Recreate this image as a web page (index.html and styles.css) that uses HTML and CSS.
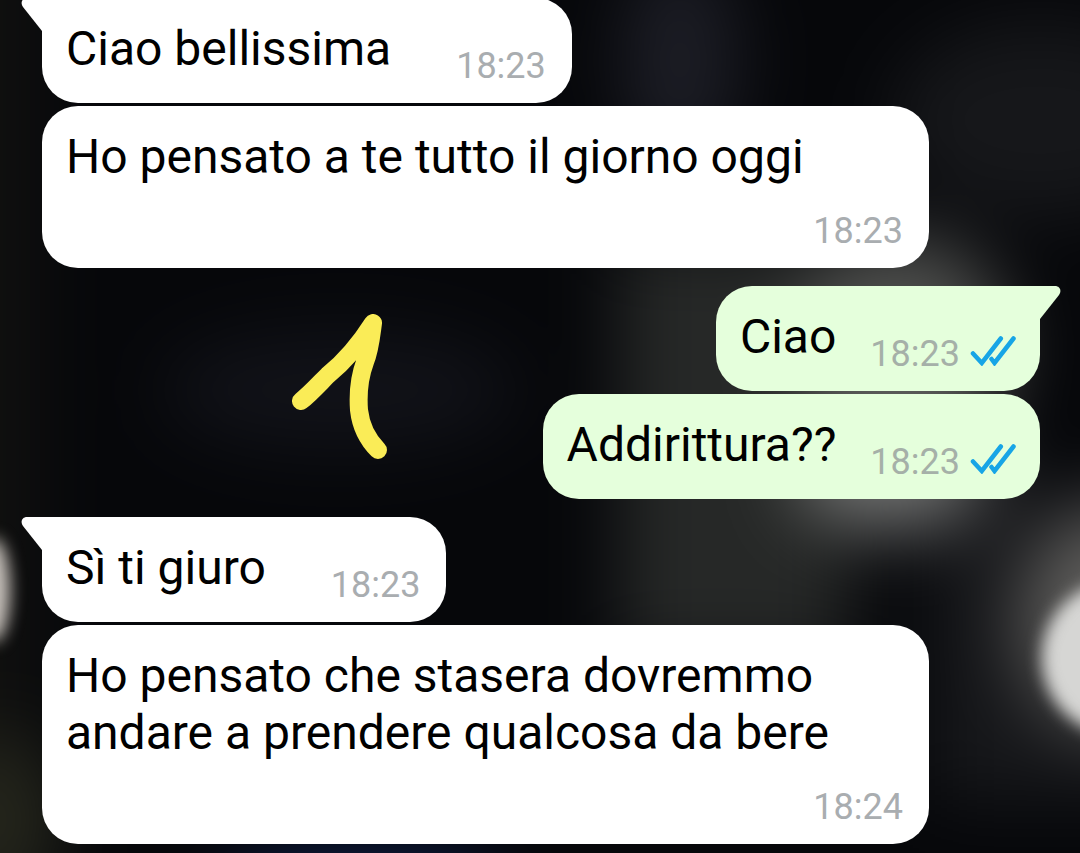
FILE: index.html
```html
<!DOCTYPE html>
<html lang="it">
<head>
    <meta charset="UTF-8">
    <meta name="viewport" content="width=device-width, initial-scale=1.0">
    <title>Chat</title>
    <link rel="stylesheet" href="styles.css">
</head>
<body>
    <main class="chat">
        <!-- out of focus lights behind the messages -->
        <svg class="wallpaper" viewBox="0 0 1080 853" preserveAspectRatio="xMidYMid slice" aria-hidden="true">
            <defs>
                <filter id="far" color-interpolation-filters="sRGB"><feGaussianBlur stdDeviation="36"/></filter>
                <filter id="near" x="-20%" y="-100%" width="140%" height="300%" color-interpolation-filters="sRGB"><feGaussianBlur stdDeviation="8"/></filter>
            </defs>
            <g filter="url(#far)">
                <rect x="-300" y="-300" width="1680" height="1453" fill="#06070a"/>
                <rect x="-300" y="-300" width="340" height="1453" fill="#10100f"/>
                <ellipse cx="680" cy="60" rx="60" ry="110" fill="#1c1d25"/>
                <ellipse cx="1040" cy="120" rx="150" ry="100" fill="#16171a"/>
                <ellipse cx="340" cy="390" rx="180" ry="60" fill="#111218"/>
                <rect x="620" y="240" width="230" height="420" fill="#262827"/>
                <rect x="930" y="480" width="300" height="320" fill="#17181b"/>
                <ellipse cx="0" cy="820" rx="60" ry="90" fill="#25261c"/>
                <ellipse cx="900" cy="350" rx="110" ry="115" fill="#4e4f4d"/>
                <ellipse cx="890" cy="470" rx="95" ry="60" fill="#747574"/>
                <ellipse cx="1110" cy="620" rx="90" ry="110" fill="#5e5d5b"/>
                <ellipse cx="360" cy="900" rx="150" ry="40" fill="#10255c"/>
            </g>
            <g filter="url(#near)">
                <circle cx="1119" cy="658" r="77" fill="#d6d6d4"/>
                <ellipse cx="-6" cy="590" rx="16" ry="52" fill="#c8c2bc"/>
            </g>
        </svg>

        <section class="group incoming">
            <article class="bubble">
                <svg class="tail" viewBox="0 0 22 34" aria-hidden="true"><path d="M22 0H6C1 0-1 5 2 9L21 33H22Z"/></svg>
                <p class="text">Ciao bellissima</p>
                <div class="meta"><time>18:23</time></div>
            </article>
            <article class="bubble">
                <p class="text">Ho pensato a te tutto il giorno oggi</p>
                <div class="meta"><time>18:23</time></div>
            </article>
        </section>

        <section class="group outgoing">
            <article class="bubble">
                <svg class="tail" viewBox="0 0 22 34" aria-hidden="true"><path d="M0 0H16C21 0 23 5 20 9L1 33H0Z"/></svg>
                <p class="text">Ciao</p>
                <div class="meta">
                    <time>18:23</time>
                    <svg class="ticks" viewBox="0 0 46 30" role="img" aria-label="Letto"><path d="M3 17.5L11.8 27L30.8 2.5M21.5 23L24.5 27L43.5 2.5"/></svg>
                </div>
            </article>
            <article class="bubble">
                <p class="text">Addirittura??</p>
                <div class="meta">
                    <time>18:23</time>
                    <svg class="ticks" viewBox="0 0 46 30" role="img" aria-label="Letto"><path d="M3 17.5L11.8 27L30.8 2.5M21.5 23L24.5 27L43.5 2.5"/></svg>
                </div>
            </article>
        </section>

        <section class="group incoming">
            <article class="bubble">
                <svg class="tail" viewBox="0 0 22 34" aria-hidden="true"><path d="M22 0H6C1 0-1 5 2 9L21 33H22Z"/></svg>
                <p class="text">Sì ti giuro</p>
                <div class="meta"><time>18:23</time></div>
            </article>
            <article class="bubble">
                <p class="text">Ho pensato che stasera dovremmo andare a prendere qualcosa da bere</p>
                <div class="meta"><time>18:24</time></div>
            </article>
        </section>

        <!-- hand-drawn mark over the chat -->
        <svg class="doodle" viewBox="0 0 96 146" aria-hidden="true">
            <path d="M9 87C18 80 27 70 36 61C52 48 67 31 81 9C79 24 78 36 73 48C67 64 66 82 67 96C69 114 76 126 86 136"/>
        </svg>
    </main>
</body>
</html>
```
FILE: styles.css
```css
* {
    box-sizing: border-box;
}

body {
    margin: 0;
    font-family: Roboto, 'Liberation Sans', sans-serif;
    color: #000;
    background-color: #06070a;
}

/* newest messages stay at the bottom, older ones slide out at the top */
.chat {
    position: relative;
    display: flex;
    flex-direction: column;
    justify-content: flex-end;
    gap: 18px;
    height: 100vh;
    padding: 0 40px 9px 42px;
    overflow: hidden;
}

.wallpaper {
    position: absolute;
    inset: 0;
    width: 100%;
    height: 100%;
}

.group {
    display: flex;
    flex-direction: column;
    flex-shrink: 0;
    gap: 3px;
}

.incoming {
    align-items: flex-start;
    --bubble: #fff;
}

.outgoing {
    align-items: flex-end;
    --bubble: #e5ffdc;
}

.bubble {
    position: relative;
    display: flex;
    flex-wrap: wrap;
    align-items: flex-end;
    column-gap: 65px;
    max-width: calc(100% - 111px);
    padding: 22px 26px 8px 24px;
    border-radius: 36px;
    background-color: var(--bubble);
}

.outgoing .bubble {
    column-gap: 34px;
    padding-right: 24px;
}

.text {
    margin: 0;
    padding-bottom: 18px;
    font-size: 48px;
    line-height: 57px;
}

.meta {
    display: flex;
    align-items: baseline;
    gap: 10px;
    margin-left: auto;
    font-size: 36px;
    line-height: 57px;
    color: #a9adb0;
}

.outgoing .meta {
    color: #a5b0a8;
}

.ticks {
    width: 46px;
    height: 30px;
    fill: none;
    stroke: #17a5e6;
    stroke-width: 4.5;
    stroke-linecap: round;
}

.tail {
    position: absolute;
    top: 0;
    width: 22px;
    height: 34px;
    fill: var(--bubble);
}

.incoming .tail {
    left: -21px;
}

.outgoing .tail {
    right: -21px;
}

/* the corner under the tail is square */
.incoming .bubble:has(.tail) {
    border-top-left-radius: 0;
}

.outgoing .bubble:has(.tail) {
    border-top-right-radius: 0;
}

.doodle {
    position: absolute;
    left: 292px;
    bottom: 393px;
    width: 96px;
    height: 146px;
    fill: none;
    stroke: #faec57;
    stroke-width: 18;
    stroke-linecap: round;
    stroke-linejoin: round;
}
```
